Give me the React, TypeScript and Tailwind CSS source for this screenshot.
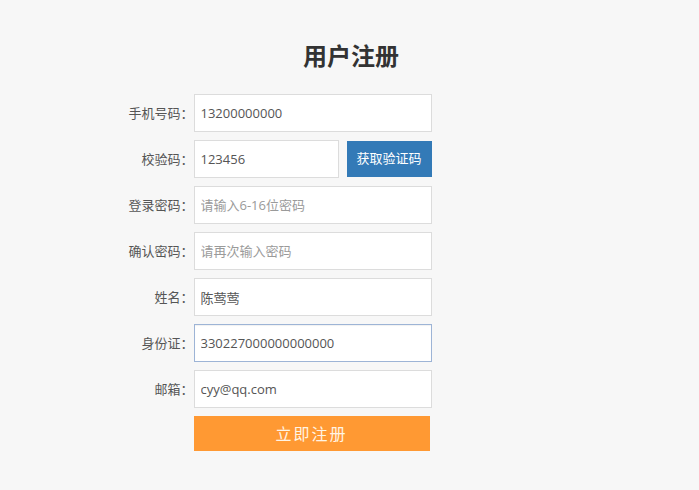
import React from "react";

const font = { fontFamily: '"Open Sans", "Noto Sans CJK SC", sans-serif' };

function Row({ label, children }: { label: string; children: React.ReactNode }) {
  return (
    <div className="flex items-center h-[38px]">
      <label className="w-[94px] shrink-0 text-right text-[13px] text-[#555] leading-none">{label}</label>
      {children}
    </div>
  );
}

function Field({ value, placeholder, focused, width }: { value?: string; placeholder?: string; focused?: boolean; width?: string }) {
  return (
    <input
      readOnly
      value={value ?? ""}
      placeholder={placeholder}
      className={
        (width ?? "w-[238px]") +
        " h-[38px] bg-white border px-[6px] text-[13px] text-[#555] placeholder:text-[#9a9a9a] outline-none " +
        (focused ? "border-[#9db4d6] shadow-[inset_0_1px_1px_rgba(0,0,0,0.06)]" : "border-[#dcdcdc]")
      }
      style={font}
    />
  );
}

export default function App() {
  return (
    <div className="min-h-screen bg-[#f7f7f7] pt-[40px]" style={font}>
      <h1 className="text-center pl-[3px] text-[24px] leading-[32px] font-bold text-[#333]">用户注册</h1>
      <div className="mx-auto w-[500px] mt-[22px] flex flex-col gap-2">
        <Row label="手机号码：">
          <Field value="13200000000" />
        </Row>
        <Row label="校验码：">
          <Field value="123456" width="w-[145px]" />
          <button className="ml-[8px] w-[85px] h-[36px] bg-[#337ab7] text-white text-[13px]" style={font}>
            获取验证码
          </button>
        </Row>
        <Row label="登录密码：">
          <Field placeholder="请输入6-16位密码" />
        </Row>
        <Row label="确认密码：">
          <Field placeholder="请再次输入密码" />
        </Row>
        <Row label="姓名：">
          <Field value="陈莺莺" />
        </Row>
        <Row label="身份证：">
          <Field value="330227000000000000" focused />
        </Row>
        <Row label="邮箱：">
          <Field value="cyy@qq.com" />
        </Row>
        <div className="flex h-[35px]">
          <div className="w-[94px] shrink-0" />
          <button className="w-[236px] h-[35px] bg-[#ff9933] text-[#fff4e4] text-[16px] tracking-[2px]" style={font}>
            立即注册
          </button>
        </div>
      </div>
    </div>
  );
}
